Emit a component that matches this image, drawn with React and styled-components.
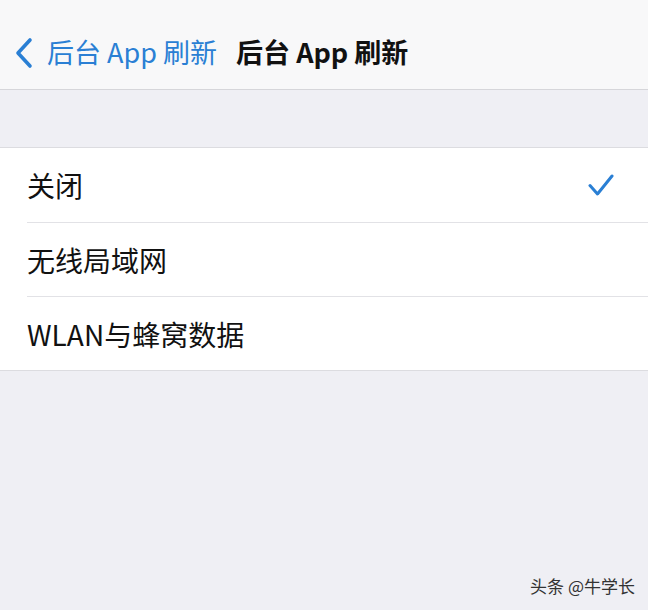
import React from 'react'
import styled, {createGlobalStyle} from 'styled-components'

const Global = createGlobalStyle`
  html, body {
    margin: 0;
    padding: 0;
    background: #efeff4;
    font-family: "Noto Sans CJK SC", "Liberation Sans", sans-serif;
  }
`

const Page = styled.div`
  width: 648px;
  height: 610px;
  background: #efeff4;
  display: flex;
  flex-direction: column;
  position: relative;
  overflow: hidden;
`

const NavBar = styled.header`
  height: 90px;
  background: #f8f8f9;
  border-bottom: 1px solid #d6d6da;
  display: flex;
  align-items: center;
  padding: 0 0 0 14px;
  box-sizing: border-box;
`

const Back = styled.button`
  display: flex;
  align-items: center;
  gap: 13px;
  background: none;
  border: none;
  padding: 0;
  color: #2a7fd4;
  font-family: inherit;
  font-size: 27px;
  margin-top: 14px;
  svg { margin-top: 2px; }
`

const Title = styled.h1`
  margin: 14px 0 0 19px;
  font-size: 27px;
  font-weight: 700;
  color: #111;
`

const Spacer = styled.div`
  height: 57px;
`

const List = styled.ul`
  list-style: none;
  margin: 0;
  padding: 0 0 0 27px;
  background: #fff;
  border-top: 1px solid #dcdce0;
  border-bottom: 1px solid #dcdce0;
`

const Row = styled.li`
  height: 74px;
  display: flex;
  align-items: center;
  justify-content: space-between;
  padding-right: 34px;
  font-size: 28px;
  color: #111;
  border-top: ${p => (p.$first ? 'none' : '1px solid #e2e2e6')};
  box-sizing: border-box;
`

const Watermark = styled.div`
  position: absolute;
  right: 13px;
  bottom: 12px;
  font-size: 17px;
  color: #333;
`

const Check = () => (
  <svg width="26" height="22" viewBox="0 0 26 22">
    <path d="M2 11.5 L9.5 20 L24 2" fill="none" stroke="#2a7fd4" strokeWidth="3" strokeLinecap="round" strokeLinejoin="round" />
  </svg>
)

const options = [
  {label: '关闭', checked: true},
  {label: '无线局域网'},
  {label: 'WLAN与蜂窝数据'},
]

export default function App() {
  return (
    <Page>
      <Global />
      <NavBar>
        <Back>
          <svg width="20" height="32" viewBox="0 0 20 32">
            <path d="M16 3 L4 16 L16 29" fill="none" stroke="#2a7fd4" strokeWidth="3.6" strokeLinecap="round" strokeLinejoin="round" />
          </svg>
          后台 App 刷新
        </Back>
        <Title>后台 App 刷新</Title>
      </NavBar>
      <Spacer />
      <List>
        {options.map((o, i) => (
          <Row key={o.label} $first={i === 0}>
            {o.label}
            {o.checked && <Check />}
          </Row>
        ))}
      </List>
      <Watermark>头条 @牛学长</Watermark>
    </Page>
  )
}
